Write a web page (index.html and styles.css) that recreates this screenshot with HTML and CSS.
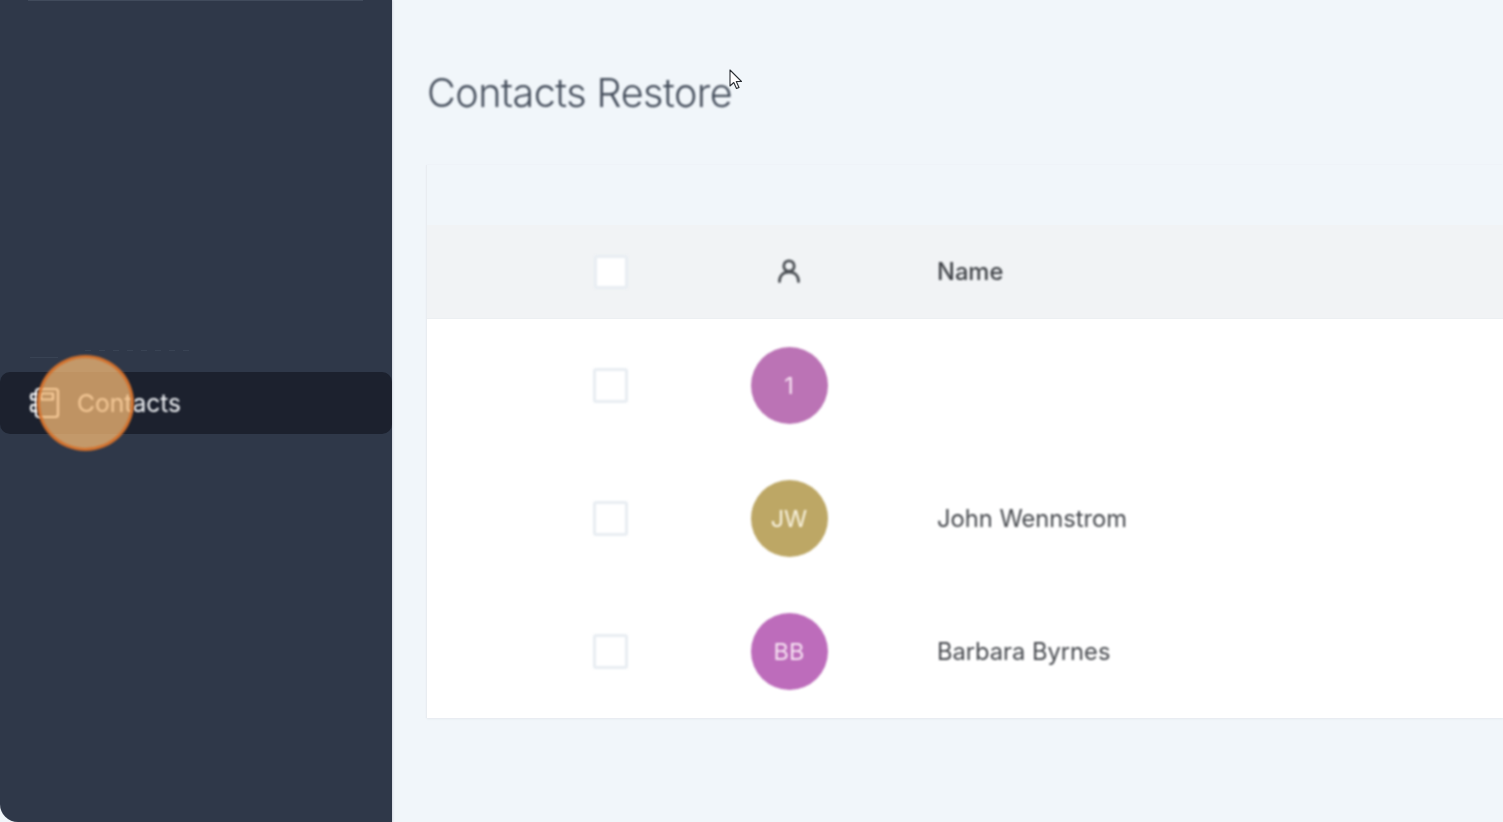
FILE: index.html
```html
<!DOCTYPE html>
<html lang="en">
<head>
<meta charset="utf-8">
<title>Contacts Restore</title>
<link rel="stylesheet" href="styles.css">
</head>
<body>
<div class="app">
  <aside class="sidebar">
    <div class="top-strip"></div>
    <div class="section-line"></div>
    <nav class="nav-item">
      <svg class="nav-icon soft" width="32" height="32" viewBox="0 0 32 32" fill="none" stroke="currentColor" stroke-width="2.200" stroke-linejoin="round" stroke-linecap="round">
        <rect x="7" y="2" width="22" height="28" rx="2.5"/>
        <path d="M12 6.500h12v6H12z"/>
        <path d="M3 7h5M3 12.500h5M3 18h5M3 24h5"/>
        <path d="M3 7c-1.500 1.500-1.500 4 0 5.500M3 18c-1.500 1.500-1.500 4.500 0 6"/>
      </svg>
      <span class="nav-label soft">Contacts</span>
    </nav>
    <div class="click-marker soft"></div>
  </aside>
  <main class="main">
    <h1 class="title soft">Contacts Restore</h1>
    <section class="card">
      <div class="card-top"></div>
      <div class="row row-head">
        <span class="checkbox checkbox-head soft"></span>
        <span class="avatar-cell soft">
          <svg class="user-icon" width="26" height="26" viewBox="0 1 26 26" fill="none" stroke="#4a4e53" stroke-width="2.800" stroke-linecap="round">
            <circle cx="13" cy="8" r="5.200"/>
            <path d="M3.500 23.500c0-6 4-9.500 9.500-9.500s9.500 3.500 9.500 9.500"/>
          </svg>
        </span>
        <span class="name name-head soft">Name</span>
      </div>
      <div class="row">
        <span class="checkbox soft"></span>
        <span class="avatar-cell soft"><span class="avatar avatar-orchid">1</span></span>
        <span class="name soft"></span>
      </div>
      <div class="row">
        <span class="checkbox soft"></span>
        <span class="avatar-cell soft"><span class="avatar avatar-khaki">JW</span></span>
        <span class="name soft">John Wennstrom</span>
      </div>
      <div class="row">
        <span class="checkbox soft"></span>
        <span class="avatar-cell soft"><span class="avatar avatar-purple">BB</span></span>
        <span class="name soft">Barbara Byrnes</span>
      </div>
    </section>
  </main>
  <svg class="cursor" width="14" height="22" viewBox="0 0 14 22">
    <path d="M1 1v16l3.800-3.500 2.700 6 2.500-1.100-2.700-5.900h5.200z" fill="#fff" stroke="#2a2e33" stroke-width="1.100" stroke-linejoin="round"/>
  </svg>
</div>
</body>
</html>
```
FILE: styles.css
```css
* { box-sizing: border-box; }
html, body { margin: 0; padding: 0; height: 100%; overflow: hidden; }
body {
  font-family: Inter, "Liberation Sans", sans-serif;
  background: #f1f6fa;
}
.soft { filter: blur(0.8px); }
.app {
  position: relative;
  display: flex;
  width: 1503px;
  height: 822px;
  overflow: hidden;
}
.sidebar {
  position: relative;
  flex: 0 0 392px;
  height: 822px;
  padding-top: 350px;
  background: #2f3849;
  border-bottom-left-radius: 18px;
  box-shadow: 1px 0 2px #d5dae2;
}
.top-strip {
  position: absolute;
  top: 0;
  left: 28px;
  width: 335px;
  height: 1px;
  background: #414b5c;
}
.section-line {
  width: 160px;
  height: 8px;
  margin-left: 30px;
  margin-bottom: 14px;
  background:
    linear-gradient(#394354, #394354) left bottom / 28px 1px no-repeat,
    repeating-linear-gradient(90deg, #394354 0 6px, transparent 6px 14px) 55px 0 / 105px 1px no-repeat;
}
.nav-item {
  display: flex;
  align-items: center;
  height: 62px;
  padding-left: 29px;
  border-radius: 10px;
  background: #1c212e;
  color: #fff;
}
.nav-icon { flex: none; }
.nav-label {
  margin-left: 16px;
  font-size: 24.600px;
  font-weight: 400;
  color: #f3f5f8;
}
.click-marker {
  position: absolute;
  left: 37px;
  top: 355px;
  width: 97px;
  height: 96px;
  border-radius: 50%;
  background: rgba(245, 185, 118, 0.75);
  border: 3px solid #d4712c;
}
.main {
  flex: 1;
  min-width: 0;
  padding: 0 0 0 35px;
}
.title {
  margin: 0;
  padding-top: 66px;
  height: 165px;
  font-size: 39.500px;
  line-height: 54px;
  font-weight: 300;
  letter-spacing: -0.5px;
  color: #434c5a;
}
.card {
  width: 1076px;
  background: #fff;
  box-shadow: -1px 0 1px #e9edf1, 0 1px 2px #e3e8ee;
}
.card-top {
  height: 60px;
  background: #f1f6fa;
}
.row {
  display: grid;
  grid-template-columns: 167px 34px 122px 78px 109px 1fr;
  align-items: center;
  height: 133px;
}
.row-head {
  height: 94px;
  background: #f1f3f5;
  border-bottom: 1px solid #eceff2;
}
.checkbox {
  grid-column: 2;
  justify-self: end;
  width: 35px;
  height: 35px;
  background: #fff;
  border: 3px solid #e8edf2;
  border-radius: 3px;
}
.checkbox-head {
  width: 34px;
  height: 34px;
}
.avatar-cell {
  grid-column: 4;
  display: flex;
  justify-content: center;
}
.avatar {
  display: flex;
  flex: none;
  align-items: center;
  justify-content: center;
  width: 77px;
  height: 77px;
  border-radius: 50%;
  font-size: 23.500px;
  color: #f7e4f3;
}
.avatar-orchid { background: #bb73b5; }
.avatar-khaki { background: #bda765; color: #f8f2de; }
.avatar-purple { background: #bd6cbb; }
.name {
  grid-column: 6;
  font-size: 23.700px;
  color: #45484d;
}
.name-head {
  font-weight: 500;
  color: #3f4247;
}
.cursor {
  position: absolute;
  left: 729px;
  top: 69px;
}
```
